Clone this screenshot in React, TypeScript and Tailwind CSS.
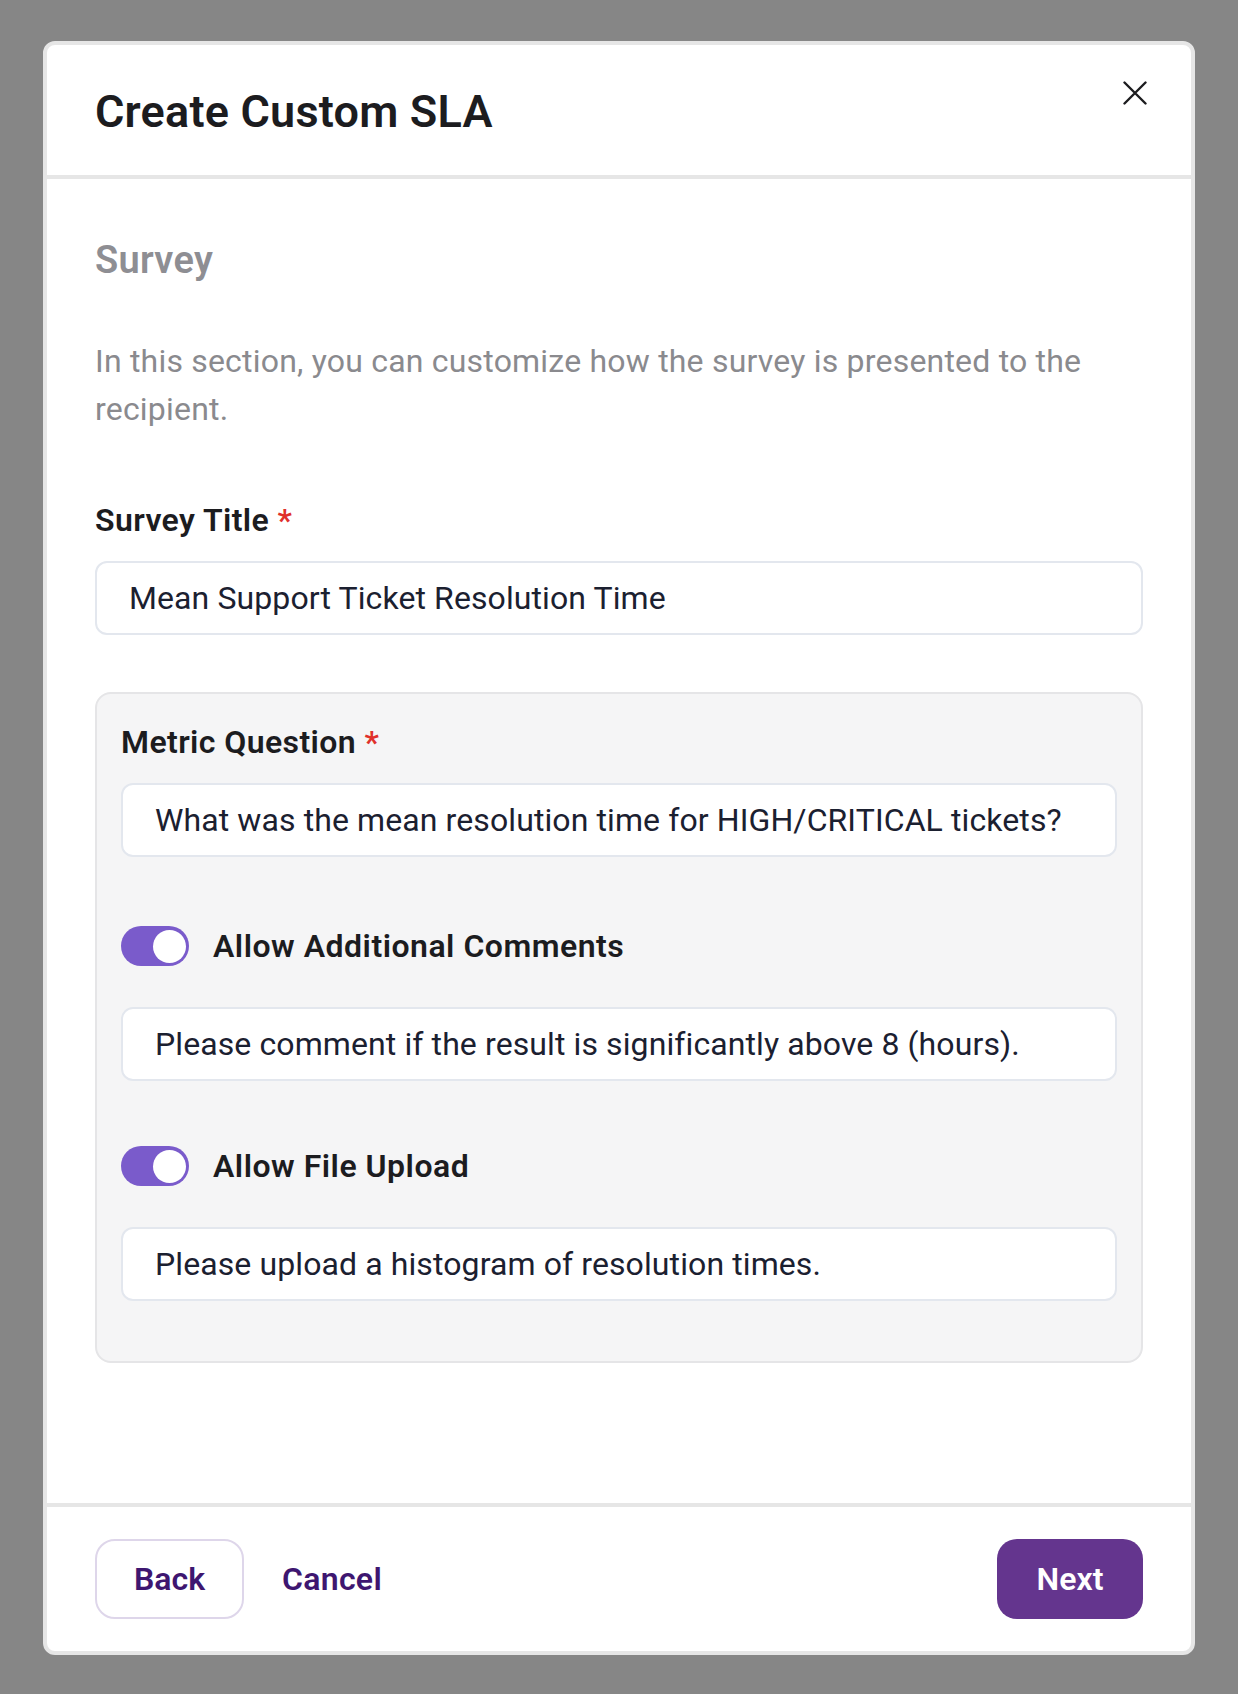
import { useState } from 'react'

type ToggleProps = {
  on: boolean
  onChange: (v: boolean) => void
}

function Toggle({ on, onChange }: ToggleProps) {
  return (
    <button
      onClick={() => onChange(!on)}
      className={`flex h-10 w-[68px] shrink-0 items-center rounded-full p-[3px] ${
        on ? 'justify-end bg-[#7a5bcb]' : 'justify-start bg-[#d4d4d8]'
      }`}
    >
      <span className="h-[33px] w-[33px] rounded-full bg-white" />
    </button>
  )
}

function Field({ value, onChange }: { value: string; onChange: (v: string) => void }) {
  return (
    <input
      value={value}
      onChange={(e) => onChange(e.target.value)}
      className="h-[74px] w-full rounded-[12px] border-2 border-[#e3e7ee] bg-white px-8 text-[32px] leading-[48px] tracking-[0.1px] text-[#1b2030] outline-none"
    />
  )
}

export default function App() {
  const [title, setTitle] = useState('Mean Support Ticket Resolution Time')
  const [question, setQuestion] = useState('What was the mean resolution time for HIGH/CRITICAL tickets?')
  const [allowComments, setAllowComments] = useState(true)
  const [comment, setComment] = useState('Please comment if the result is significantly above 8 (hours).')
  const [allowUpload, setAllowUpload] = useState(true)
  const [upload, setUpload] = useState('Please upload a histogram of resolution times.')

  return (
    <div
      className="min-h-[1694px] bg-[#868686] px-[43px] pt-[41px]"
      style={{ fontFamily: 'Roboto, "Noto Sans", sans-serif' }}
    >
      <div className="overflow-hidden rounded-[12px] border-4 border-[#e6e6e6] bg-white">
        {/* header */}
        <div className="flex h-[134px] items-start justify-between border-b-4 border-[#e6e6e6] pl-12 pr-[44px]">
          <h1 className="mt-[39px] text-[45px] font-semibold leading-[56px] tracking-[0.2px] text-[#1c1c1f]">
            Create Custom SLA
          </h1>
          <button className="mt-[36px] text-[#1c1c1f]">
            <svg width="24" height="24" viewBox="0 0 24 24" fill="none" stroke="currentColor" strokeWidth="2.4" strokeLinecap="round">
              <path d="M1.5 1.5l21 21M22.5 1.5l-21 21" />
            </svg>
          </button>
        </div>

        {/* body */}
        <div className="h-[1324px] px-12 pt-[57px]">
          <h2 className="text-[38px] font-semibold leading-[48px] tracking-[0.3px] text-[#8e8e93]">Survey</h2>
          <p className="mt-[53px] text-[32px] leading-[48px] tracking-[0.2px] text-[#8a8a8e]">
            In this section, you can customize how the survey is presented to the recipient.
          </p>

          <label className="mt-[63px] block text-[32px] font-semibold leading-[48px] tracking-[0.4px] text-[#1c1c1f]">
            Survey Title <span className="text-[#e0312b]">*</span>
          </label>
          <div className="mt-[17px]">
            <Field value={title} onChange={setTitle} />
          </div>

          <div className="mt-[57px] rounded-[16px] border-2 border-[#e5e5e7] bg-[#f5f5f6] px-6 pb-[60px] pt-6">
            <label className="block text-[32px] font-semibold leading-[48px] tracking-[0.4px] text-[#1c1c1f]">
              Metric Question <span className="text-[#e0312b]">*</span>
            </label>
            <div className="mt-[17px]">
              <Field value={question} onChange={setQuestion} />
            </div>

            <div className="mt-[69px] flex h-10 items-center gap-6">
              <Toggle on={allowComments} onChange={setAllowComments} />
              <span className="text-[32px] font-semibold leading-[48px] tracking-[0.5px] text-[#1c1c1f]">
                Allow Additional Comments
              </span>
            </div>
            <div className="mt-[41px]">
              <Field value={comment} onChange={setComment} />
            </div>

            <div className="mt-[65px] flex h-10 items-center gap-6">
              <Toggle on={allowUpload} onChange={setAllowUpload} />
              <span className="text-[32px] font-semibold leading-[48px] tracking-[0.5px] text-[#1c1c1f]">
                Allow File Upload
              </span>
            </div>
            <div className="mt-[41px]">
              <Field value={upload} onChange={setUpload} />
            </div>
          </div>
        </div>

        {/* footer */}
        <div className="flex h-[148px] items-center border-t-4 border-[#e6e6e6] px-12">
          <button className="flex h-20 w-[149px] items-center justify-center rounded-[20px] border-2 border-[#ded6ea] text-[32px] font-semibold text-[#3e1670]">
            Back
          </button>
          <button className="ml-[38px] text-[32px] font-semibold tracking-[0.3px] text-[#3e1670]">Cancel</button>
          <button className="ml-auto flex h-20 w-[146px] items-center justify-center rounded-[20px] bg-[#64358e] text-[32px] font-semibold text-white">
            Next
          </button>
        </div>
      </div>
    </div>
  )
}
